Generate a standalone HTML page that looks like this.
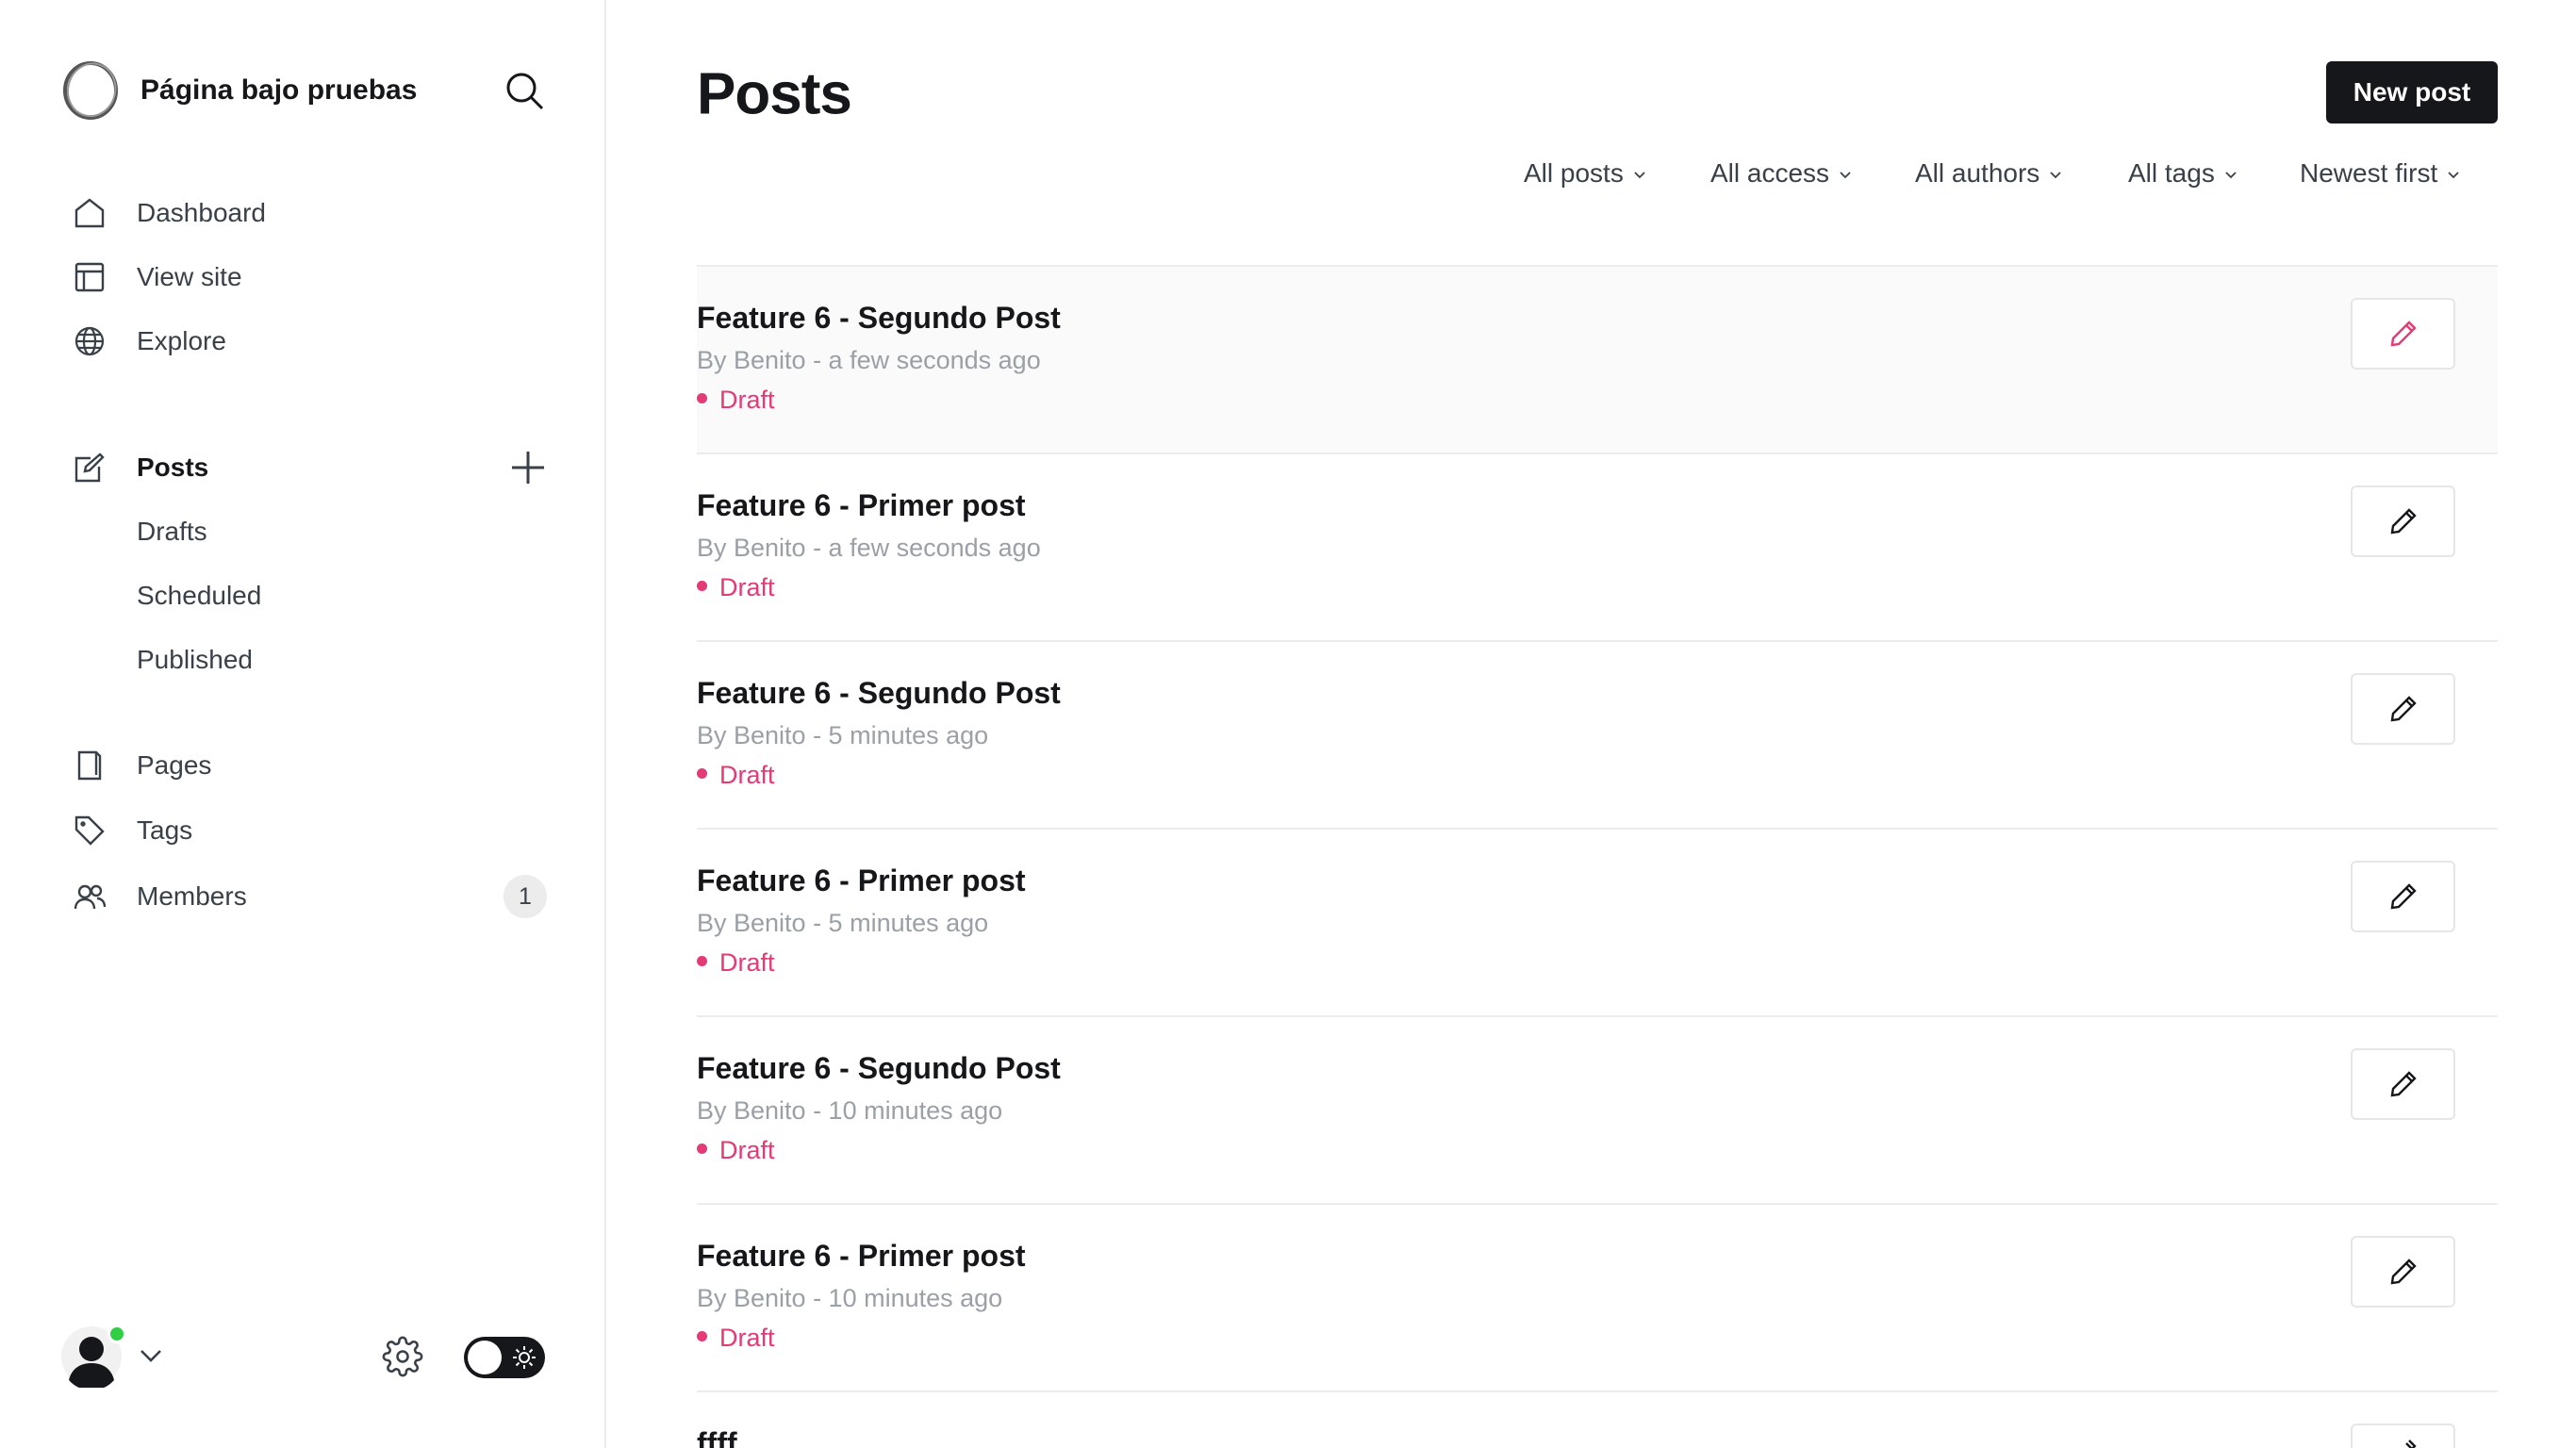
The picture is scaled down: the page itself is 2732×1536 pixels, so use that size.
<!DOCTYPE html>
<html><head><meta charset="utf-8"><style>
*{margin:0;padding:0;box-sizing:border-box}
html,body{width:2732px;height:1536px;overflow:hidden;background:#fff}
body{font-family:"Liberation Sans",sans-serif;color:#15171a}
#wrap{position:relative;width:2732px;height:1536px;overflow:hidden}
.sb{position:absolute;left:0;top:0;width:643px;height:1536px;border-right:2px solid #ececec}
.abs{position:absolute}
.nav{position:absolute;left:145px;font-size:28px;color:#394047;transform:translateY(-50%)}
.ic{position:absolute;left:78px;width:34px;height:34px;transform:translateY(-50%)}
.main{position:absolute;left:739px;top:0;width:1910px;height:1536px;overflow:hidden}
.filter{position:absolute;top:184px;transform:translateY(-50%);font-size:28px;color:#394047;white-space:nowrap}
.filter svg{margin-left:10px;vertical-align:middle}
.row{position:absolute;left:0;width:1910px;height:199px;border-top:2px solid #ececec;overflow:hidden}
.row .t{position:absolute;left:0;top:36px;font-size:32px;font-weight:bold;color:#15171a}
.row .m{position:absolute;left:0;top:84px;font-size:27px;color:#9ba0a6}
.row .d{position:absolute;left:0;top:126px;font-size:27px;color:#e43a75}
.row .d:before{content:"";display:inline-block;width:11px;height:11px;border-radius:50%;background:#e43a75;margin-right:13px;vertical-align:middle;position:relative;top:-3px}
.row .e{position:absolute;left:1754px;top:33px;width:111px;height:76px;border:2px solid #e4e6e8;border-radius:6px;background:#fff;display:flex;align-items:center;justify-content:center}
</style></head><body><div id="wrap">
<div class="sb">
  <svg class="abs" style="left:64px;top:64px" width="64" height="64" viewBox="0 0 64 64"><ellipse cx="32" cy="32" rx="27" ry="29" fill="none" stroke="#555" stroke-width="4"/><ellipse cx="33" cy="31" rx="25" ry="28" fill="none" stroke="#999" stroke-width="2" transform="rotate(15 32 32)"/></svg>
  <div class="abs" style="left:149px;top:96px;transform:translateY(-50%);font-size:30px;font-weight:bold">Página bajo pruebas</div>
  <svg class="abs" style="left:536px;top:76px" width="42" height="42" viewBox="0 0 42 42" fill="none" stroke="#15171a" stroke-width="3"><circle cx="17" cy="17" r="14"/><line x1="27" y1="27" x2="39" y2="39"/></svg>

  <svg class="ic" style="top:226px" viewBox="0 0 34 34" fill="none" stroke="#394047" stroke-width="2.4"><path d="M3 31V14L17 3l14 11v17z"/></svg>
  <div class="nav" style="top:226px">Dashboard</div>
  <svg class="ic" style="top:294px" viewBox="0 0 34 34" fill="none" stroke="#394047" stroke-width="2.4"><rect x="3" y="3" width="28" height="28" rx="2"/><path d="M3 11h28M11 11v20"/></svg>
  <div class="nav" style="top:294px">View site</div>
  <svg class="ic" style="top:362px" viewBox="0 0 34 34" fill="none" stroke="#394047" stroke-width="2.2"><circle cx="17" cy="17" r="14"/><ellipse cx="17" cy="17" rx="6" ry="14"/><path d="M3 17h28M5 10h24M5 24h24"/></svg>
  <div class="nav" style="top:362px">Explore</div>

  <svg class="ic" style="top:496px" viewBox="0 0 34 34" fill="none" stroke="#394047" stroke-width="2.4"><path d="M18 7H3v24h24V16"/><path d="M28 3l3 3-14 14-5 1 1-5z"/></svg>
  <div class="nav" style="top:496px;font-weight:bold;color:#15171a">Posts</div>
  <svg class="abs" style="left:540px;top:476px" width="40" height="40" viewBox="0 0 40 40" stroke="#394047" stroke-width="3"><path d="M20 3v34M3 20h34"/></svg>
  <div class="nav" style="top:564px">Drafts</div>
  <div class="nav" style="top:632px">Scheduled</div>
  <div class="nav" style="top:700px">Published</div>

  <svg class="ic" style="top:812px" viewBox="0 0 34 34" fill="none" stroke="#394047" stroke-width="2.4"><path d="M6 3h18l4 4v24H6z"/><path d="M24 3v24"/></svg>
  <div class="nav" style="top:812px">Pages</div>
  <svg class="ic" style="top:881px" viewBox="0 0 34 34" fill="none" stroke="#394047" stroke-width="2.4"><path d="M3 3h13l15 15-13 13L3 16z"/><circle cx="10" cy="10" r="1.5"/></svg>
  <div class="nav" style="top:881px">Tags</div>
  <svg class="ic" style="top:951px" viewBox="0 0 34 34" fill="none" stroke="#394047" stroke-width="2.4"><circle cx="12" cy="12" r="6"/><path d="M2 30c0-7 5-10 10-10s10 3 10 10"/><circle cx="24" cy="11" r="5"/><path d="M25 19c4 0 8 3 8 9"/></svg>
  <div class="nav" style="top:951px">Members</div>
  <div class="abs" style="left:534px;top:928px;width:46px;height:46px;border-radius:50%;background:#ececec;font-size:25px;color:#394047;display:flex;align-items:center;justify-content:center">1</div>

  <svg class="abs" style="left:64px;top:1406px" width="66" height="66" viewBox="0 0 66 66"><circle cx="33" cy="33" r="32" fill="#f1f1f1"/><circle cx="33" cy="25" r="13" fill="#15171a"/><path d="M9 58c3-13 13-18 24-18s21 5 24 18a32 32 0 0 1-48 0z" fill="#15171a"/></svg>
  <div class="abs" style="left:114px;top:1405px;width:20px;height:20px;border-radius:50%;background:#30cf43;border:3px solid #fff"></div>
  <svg class="abs" style="left:148px;top:1430px" width="24" height="16" viewBox="0 0 24 16" fill="none" stroke="#394047" stroke-width="2.6"><path d="M2 3l10 10 10-10"/></svg>
  <svg class="abs" style="left:405px;top:1417px" width="44" height="44" viewBox="0 0 24 24" fill="none" stroke="#394047" stroke-width="1.4"><circle cx="12" cy="12" r="3"/><path d="M19.4 15a1.7 1.7 0 0 0 .3 1.8l.1.1a2 2 0 1 1-2.8 2.8l-.1-.1a1.7 1.7 0 0 0-1.8-.3 1.7 1.7 0 0 0-1 1.5V21a2 2 0 1 1-4 0v-.1a1.7 1.7 0 0 0-1.1-1.5 1.7 1.7 0 0 0-1.8.3l-.1.1a2 2 0 1 1-2.8-2.8l.1-.1a1.7 1.7 0 0 0 .3-1.8 1.7 1.7 0 0 0-1.5-1H3a2 2 0 1 1 0-4h.1a1.7 1.7 0 0 0 1.5-1.1 1.7 1.7 0 0 0-.3-1.8l-.1-.1a2 2 0 1 1 2.8-2.8l.1.1a1.7 1.7 0 0 0 1.8.3H9a1.7 1.7 0 0 0 1-1.5V3a2 2 0 1 1 4 0v.1a1.7 1.7 0 0 0 1 1.5 1.7 1.7 0 0 0 1.8-.3l.1-.1a2 2 0 1 1 2.8 2.8l-.1.1a1.7 1.7 0 0 0-.3 1.8V9a1.7 1.7 0 0 0 1.5 1H21a2 2 0 1 1 0 4h-.1a1.7 1.7 0 0 0-1.5 1z"/></svg>
  <div class="abs" style="left:492px;top:1418px;width:86px;height:44px;border-radius:22px;background:#15171a">
    <div class="abs" style="left:4px;top:4px;width:36px;height:36px;border-radius:50%;background:#fff"></div>
    <svg class="abs" style="left:50px;top:8px" width="28" height="28" viewBox="0 0 28 28" fill="none" stroke="#fff" stroke-width="2"><circle cx="14" cy="14" r="5"/><path d="M14 2v4M14 22v4M2 14h4M22 14h4M5.5 5.5l3 3M19.5 19.5l3 3M5.5 22.5l3-3M19.5 8.5l3-3"/></svg>
  </div>
</div>

<div class="main">
  <div class="abs" style="left:0;top:100px;transform:translateY(-50%);font-size:62px;font-weight:bold;letter-spacing:-1px">Posts</div>
  <div class="abs" style="left:1728px;top:65px;width:182px;height:66px;background:#15171a;border-radius:6px;color:#fff;font-size:28px;font-weight:bold;display:flex;align-items:center;justify-content:center">New post</div>
  <div class="filter" style="left:877px">All posts<svg width="14" height="10" viewBox="0 0 14 10" fill="none" stroke="#394047" stroke-width="1.8"><path d="M2 2l5 5 5-5"/></svg></div>
  <div class="filter" style="left:1075px">All access<svg width="14" height="10" viewBox="0 0 14 10" fill="none" stroke="#394047" stroke-width="1.8"><path d="M2 2l5 5 5-5"/></svg></div>
  <div class="filter" style="left:1292px">All authors<svg width="14" height="10" viewBox="0 0 14 10" fill="none" stroke="#394047" stroke-width="1.8"><path d="M2 2l5 5 5-5"/></svg></div>
  <div class="filter" style="left:1518px">All tags<svg width="14" height="10" viewBox="0 0 14 10" fill="none" stroke="#394047" stroke-width="1.8"><path d="M2 2l5 5 5-5"/></svg></div>
  <div class="filter" style="left:1700px">Newest first<svg width="14" height="10" viewBox="0 0 14 10" fill="none" stroke="#394047" stroke-width="1.8"><path d="M2 2l5 5 5-5"/></svg></div>

  <div class="row" style="top:281px;background:#fafafa"><div class="t">Feature 6 - Segundo Post</div><div class="m">By Benito - a few seconds ago</div><div class="d">Draft</div><div class="e"><svg width="32" height="32" viewBox="0 0 32 32" fill="none" stroke="#e43a75" stroke-width="2.4"><path d="M22 4l6 6L11 27l-7 1 1-7z"/><path d="M19 7l6 6"/></svg></div></div>
  <div class="row" style="top:480px"><div class="t">Feature 6 - Primer post</div><div class="m">By Benito - a few seconds ago</div><div class="d">Draft</div><div class="e"><svg width="32" height="32" viewBox="0 0 32 32" fill="none" stroke="#15171a" stroke-width="2.4"><path d="M22 4l6 6L11 27l-7 1 1-7z"/><path d="M19 7l6 6"/></svg></div></div>
  <div class="row" style="top:679px"><div class="t">Feature 6 - Segundo Post</div><div class="m">By Benito - 5 minutes ago</div><div class="d">Draft</div><div class="e"><svg width="32" height="32" viewBox="0 0 32 32" fill="none" stroke="#15171a" stroke-width="2.4"><path d="M22 4l6 6L11 27l-7 1 1-7z"/><path d="M19 7l6 6"/></svg></div></div>
  <div class="row" style="top:878px"><div class="t">Feature 6 - Primer post</div><div class="m">By Benito - 5 minutes ago</div><div class="d">Draft</div><div class="e"><svg width="32" height="32" viewBox="0 0 32 32" fill="none" stroke="#15171a" stroke-width="2.4"><path d="M22 4l6 6L11 27l-7 1 1-7z"/><path d="M19 7l6 6"/></svg></div></div>
  <div class="row" style="top:1077px"><div class="t">Feature 6 - Segundo Post</div><div class="m">By Benito - 10 minutes ago</div><div class="d">Draft</div><div class="e"><svg width="32" height="32" viewBox="0 0 32 32" fill="none" stroke="#15171a" stroke-width="2.4"><path d="M22 4l6 6L11 27l-7 1 1-7z"/><path d="M19 7l6 6"/></svg></div></div>
  <div class="row" style="top:1276px"><div class="t">Feature 6 - Primer post</div><div class="m">By Benito - 10 minutes ago</div><div class="d">Draft</div><div class="e"><svg width="32" height="32" viewBox="0 0 32 32" fill="none" stroke="#15171a" stroke-width="2.4"><path d="M22 4l6 6L11 27l-7 1 1-7z"/><path d="M19 7l6 6"/></svg></div></div>
  <div class="row" style="top:1475px;height:61px"><div class="t">ffff</div><div class="e" style="height:28px;border-bottom:none;border-radius:6px 6px 0 0;align-items:flex-end;overflow:hidden"><svg width="32" height="14" viewBox="0 0 32 14" fill="none" stroke="#15171a" stroke-width="2.4"><path d="M22 4l6 6-4 4M19 7l6 6"/></svg></div></div>
</div>
</div></body></html>
